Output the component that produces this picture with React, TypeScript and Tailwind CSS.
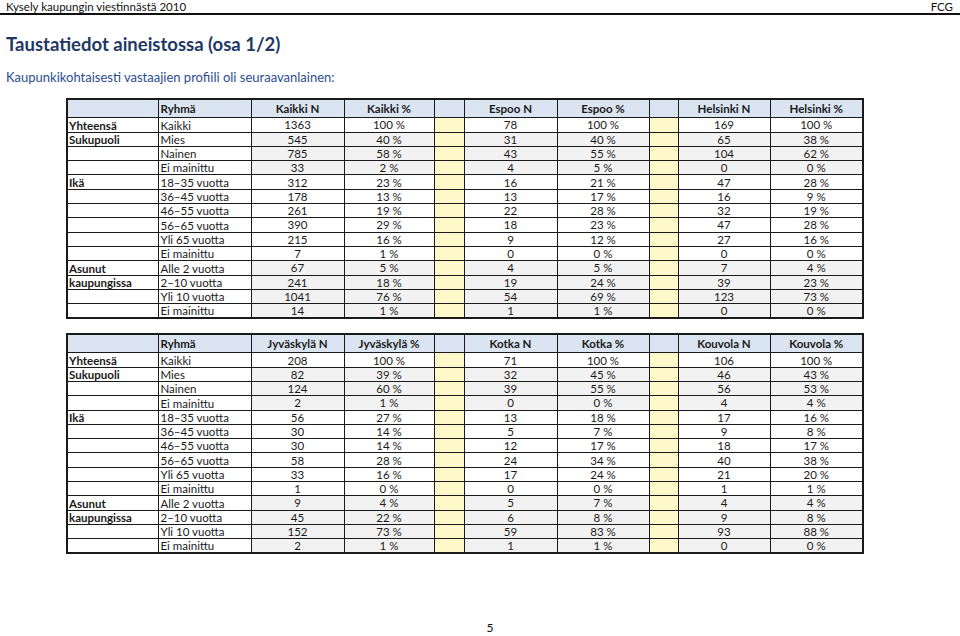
import React from "react";

type Row = { g?: string; r: string; v: string[]; shade: boolean };

const widths = [91, 93, 93, 90, 30, 93, 92, 29, 92, 93];

const t1Head = ["Kaikki N", "Kaikki %", "Espoo N", "Espoo %", "Helsinki N", "Helsinki %"];
const t2Head = ["Jyväskylä N", "Jyväskylä %", "Kotka N", "Kotka %", "Kouvola N", "Kouvola %"];

const labels: { g?: string; r: string; shade: boolean }[] = [
  { g: "Yhteensä", r: "Kaikki", shade: false },
  { g: "Sukupuoli", r: "Mies", shade: true },
  { r: "Nainen", shade: true },
  { r: "Ei mainittu", shade: true },
  { g: "Ikä", r: "18–35 vuotta", shade: false },
  { r: "36–45 vuotta", shade: false },
  { r: "46–55 vuotta", shade: false },
  { r: "56–65 vuotta", shade: false },
  { r: "Yli 65 vuotta", shade: false },
  { r: "Ei mainittu", shade: false },
  { g: "Asunut", r: "Alle 2 vuotta", shade: true },
  { g: "kaupungissa", r: "2–10 vuotta", shade: true },
  { r: "Yli 10 vuotta", shade: true },
  { r: "Ei mainittu", shade: true },
];

const t1Vals = [
  ["1363", "100 %", "78", "100 %", "169", "100 %"],
  ["545", "40 %", "31", "40 %", "65", "38 %"],
  ["785", "58 %", "43", "55 %", "104", "62 %"],
  ["33", "2 %", "4", "5 %", "0", "0 %"],
  ["312", "23 %", "16", "21 %", "47", "28 %"],
  ["178", "13 %", "13", "17 %", "16", "9 %"],
  ["261", "19 %", "22", "28 %", "32", "19 %"],
  ["390", "29 %", "18", "23 %", "47", "28 %"],
  ["215", "16 %", "9", "12 %", "27", "16 %"],
  ["7", "1 %", "0", "0 %", "0", "0 %"],
  ["67", "5 %", "4", "5 %", "7", "4 %"],
  ["241", "18 %", "19", "24 %", "39", "23 %"],
  ["1041", "76 %", "54", "69 %", "123", "73 %"],
  ["14", "1 %", "1", "1 %", "0", "0 %"],
];

const t2Vals = [
  ["208", "100 %", "71", "100 %", "106", "100 %"],
  ["82", "39 %", "32", "45 %", "46", "43 %"],
  ["124", "60 %", "39", "55 %", "56", "53 %"],
  ["2", "1 %", "0", "0 %", "4", "4 %"],
  ["56", "27 %", "13", "18 %", "17", "16 %"],
  ["30", "14 %", "5", "7 %", "9", "8 %"],
  ["30", "14 %", "12", "17 %", "18", "17 %"],
  ["58", "28 %", "24", "34 %", "40", "38 %"],
  ["33", "16 %", "17", "24 %", "21", "20 %"],
  ["1", "0 %", "0", "0 %", "1", "1 %"],
  ["9", "4 %", "5", "7 %", "4", "4 %"],
  ["45", "22 %", "6", "8 %", "9", "8 %"],
  ["152", "73 %", "59", "83 %", "93", "88 %"],
  ["2", "1 %", "1", "1 %", "0", "0 %"],
];

function DataTable({ head, vals }: { head: string[]; vals: string[][] }) {
  const rows: Row[] = labels.map((l, i) => ({ ...l, v: vals[i] }));
  const cell = "border border-[#1a1a1a] p-0";
  return (
    <table className="table-fixed border-collapse border-2 border-[#1a1a1a] ml-[66px] w-[796px] text-[11.5px] text-[#1a1a1a]">
      <colgroup>
        {widths.map((w, i) => (
          <col key={i} style={{ width: w }} />
        ))}
      </colgroup>
      <thead>
        <tr className="h-[18px] bg-[#dbe5f1]">
          <th className={cell}></th>
          <th className={`${cell} text-left pl-[2px] font-bold`}>Ryhmä</th>
          <th className={`${cell} text-center font-bold`}>{head[0]}</th>
          <th className={`${cell} text-center font-bold`}>{head[1]}</th>
          <th className={cell}></th>
          <th className={`${cell} text-center font-bold`}>{head[2]}</th>
          <th className={`${cell} text-center font-bold`}>{head[3]}</th>
          <th className={cell}></th>
          <th className={`${cell} text-center font-bold`}>{head[4]}</th>
          <th className={`${cell} text-center font-bold`}>{head[5]}</th>
        </tr>
      </thead>
      <tbody>
        {rows.map((r, i) => {
          const bg = r.shade ? "bg-[#f2f2f2]" : "bg-white";
          return (
            <tr key={i} className="h-[14.3px] leading-[13px]">
              <td className={`${cell} bg-white font-bold pl-[1px] align-bottom`}>{r.g ?? ""}</td>
              <td className={`${cell} bg-white pl-[2px] align-bottom`}>{r.r}</td>
              <td className={`${cell} ${bg} text-center`}>{r.v[0]}</td>
              <td className={`${cell} ${bg} text-center`}>{r.v[1]}</td>
              <td className={`${cell} bg-[#fff9c9]`}></td>
              <td className={`${cell} ${bg} text-center`}>{r.v[2]}</td>
              <td className={`${cell} ${bg} text-center`}>{r.v[3]}</td>
              <td className={`${cell} bg-[#fff9c9]`}></td>
              <td className={`${cell} ${bg} text-center`}>{r.v[4]}</td>
              <td className={`${cell} ${bg} text-center`}>{r.v[5]}</td>
            </tr>
          );
        })}
      </tbody>
    </table>
  );
}

export default function App() {
  return (
    <div
      className="w-[960px] h-[636px] bg-white flex flex-col overflow-hidden text-[#111]"
      style={{ fontFamily: "Lato, 'Open Sans', sans-serif" }}
    >
      <div className="h-[15px] border-b-2 border-[#111] flex items-end justify-between px-[6px] text-[11.5px] leading-[13px]">
        <span>Kysely kaupungin viestinnästä 2010</span>
        <span className="pr-[1px]">FCG</span>
      </div>
      <div className="pl-[6px] pt-[18px] text-[18.5px] leading-[22px] font-bold text-[#1f3864]">
        Taustatiedot aineistossa (osa 1/2)
      </div>
      <div className="pl-[6px] pt-[14px] text-[13px] leading-[16px] text-[#2a4d8f]">
        Kaupunkikohtaisesti vastaajien profiili oli seuraavanlainen:
      </div>
      <div className="pt-[13px]">
        <DataTable head={t1Head} vals={t1Vals} />
      </div>
      <div className="pt-[14px]">
        <DataTable head={t2Head} vals={t2Vals} />
      </div>
      <div className="mt-auto h-[15px] text-center text-[12px] leading-[14px] pl-[20px]">5</div>
    </div>
  );
}
